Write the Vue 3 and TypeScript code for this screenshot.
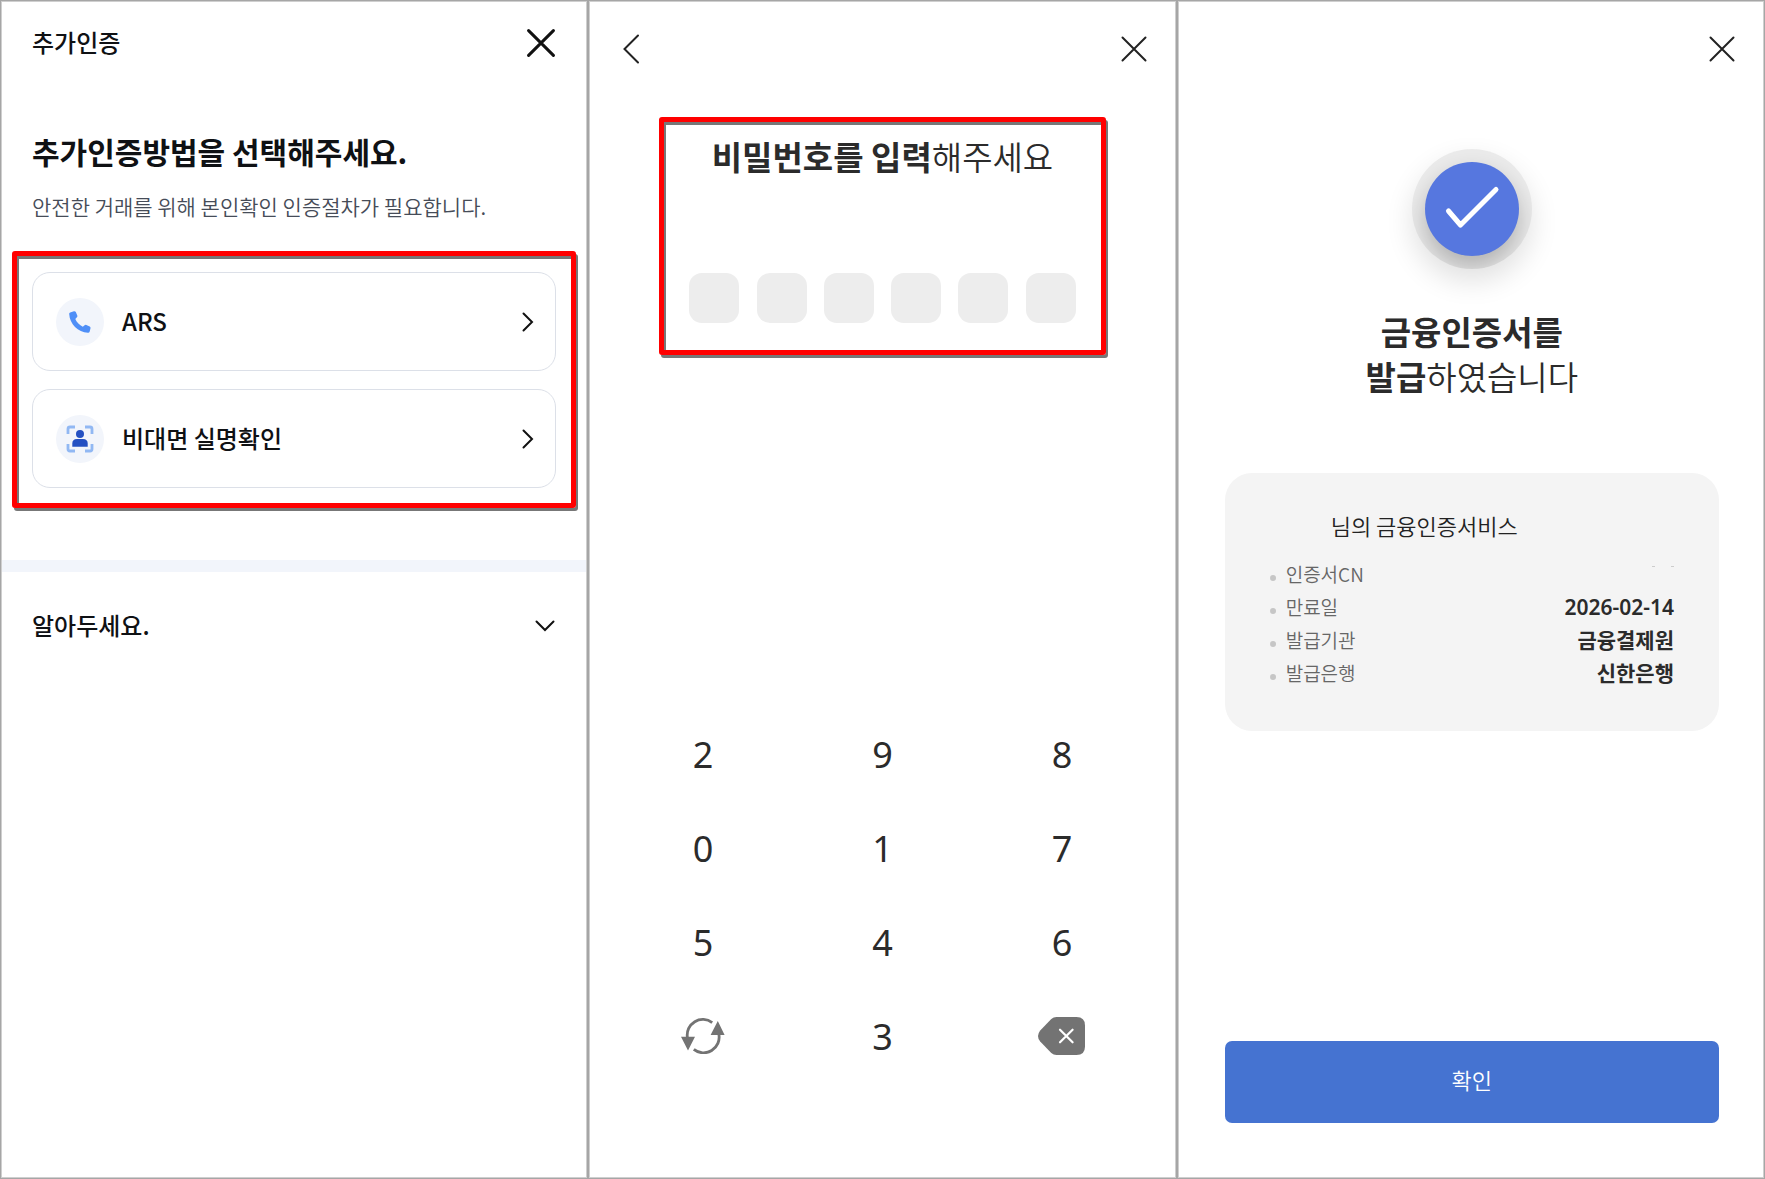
<script setup lang="ts">
import { ref } from 'vue'

interface Method { id: string; label: string }
interface Detail { label: string; value: string }

const methods: Method[] = [
  { id: 'ars', label: 'ARS' },
  { id: 'face', label: '비대면 실명확인' },
]

const details: Detail[] = [
  { label: '인증서CN', value: '' },
  { label: '만료일', value: '2026-02-14' },
  { label: '발급기관', value: '금융결제원' },
  { label: '발급은행', value: '신한은행' },
]

const keys: string[] = ['2', '9', '8', '0', '1', '7', '5', '4', '6', 'shuffle', '3', 'delete']
const pinLength = 6
const pin = ref<string[]>([])

function press(key: string) {
  if (key === 'shuffle') return
  if (key === 'delete') pin.value.pop()
  else if (pin.value.length < pinLength) pin.value.push(key)
}
</script>

<template>
  <main class="screens">
    <section class="panel">
      <header class="bar">
        <h1 class="bar-title">추가인증</h1>
        <button class="icon-btn" type="button" aria-label="닫기">
          <svg class="close-lg" viewBox="0 0 28 28"><path d="M1.6 1.6 26.4 26.4M26.4 1.6 1.6 26.4" /></svg>
        </button>
      </header>
      <h2 class="lead">추가인증방법을 선택해주세요.</h2>
      <p class="sub">안전한 거래를 위해 본인확인 인증절차가 필요합니다.</p>

      <div class="frame methods">
        <button v-for="m in methods" :key="m.id" class="method" type="button">
          <span class="method-icon">
            <svg v-if="m.id === 'ars'" viewBox="0 0 48 48">
              <path fill="#4f8ff7" d="M14.2 14.4 17.9 13.2Q19.2 12.9 19.8 14.1L21.3 17.4Q21.7 18.5 20.9 19.3L19.3 20.9C20.8 24.2 23.6 27.1 26.8 28.7L28.6 27.2Q29.4 26.5 30.4 27L33.7 28.5Q34.8 29.1 34.5 30.3L33.7 33.6Q33.3 34.9 31.9 34.8C22 34.3 13.7 26 13.2 16Q13.1 14.8 14.2 14.4Z" />
            </svg>
            <svg v-else viewBox="0 0 48 48">
              <path fill="none" stroke="#91b8f3" stroke-width="2.8" d="M12 19V14Q12 12 14 12H19M29 12H34Q36 12 36 14V19M36 29V34Q36 36 34 36H29M19 36H14Q12 36 12 34V29" />
              <circle cx="24" cy="19" r="4" fill="#2450c2" />
              <path fill="#2450c2" d="M16.3 31.8V28.6Q16.3 24 21 24H27Q31.7 24 31.7 28.6V31.8Z" />
            </svg>
          </span>
          <span class="method-label">{{ m.label }}</span>
          <svg class="chevron" viewBox="0 0 12 20"><path d="M1.5 1.5 10 10 1.5 18.5" /></svg>
        </button>
      </div>

      <div class="divider"></div>
      <button class="notice" type="button" aria-expanded="false">
        <span class="notice-label">알아두세요.</span>
        <svg class="chevron-down" viewBox="0 0 20 12"><path d="M1.5 1.5 10 10 18.5 1.5" /></svg>
      </button>
    </section>

    <section class="panel">
      <header class="bar tall">
        <button class="icon-btn" type="button" aria-label="뒤로">
          <svg class="back" viewBox="0 0 18 30"><path d="M16 1.5 2.5 15 16 28.5" /></svg>
        </button>
        <button class="icon-btn" type="button" aria-label="닫기">
          <svg class="close-sm" viewBox="0 0 26 26"><path d="M1.5 1.5 24.5 24.5M24.5 1.5 1.5 24.5" /></svg>
        </button>
      </header>

      <div class="frame pin-box">
        <h2 class="headline"><strong>비밀번호를 입력</strong>해주세요</h2>
        <div class="pin">
          <input
            v-for="n in pinLength" :key="n" class="pin-cell" type="password" maxlength="1" readonly
            :value="pin[n - 1] ?? ''" :aria-label="`비밀번호 ${n}번째 자리`"
          />
        </div>
      </div>

      <div class="keypad">
        <button v-for="k in keys" :key="k" class="key" type="button" :aria-label="k" @click="press(k)">
          <svg v-if="k === 'shuffle'" class="shuffle" viewBox="0 0 44 36">
            <path fill="none" stroke="#737373" stroke-width="2.8" d="M6.4 19.5A15.6 15.6 0 0 1 31.2 4.6M37.8 16A15.6 15.6 0 0 1 12.8 31.4" />
            <path fill="#737373" d="M0 18.7H14L7 32.6ZM29.6 17H43.6L36.8 3Z" />
          </svg>
          <svg v-else-if="k === 'delete'" class="delete" viewBox="0 0 48 38">
            <path fill="#737373" d="M18.5 0H38.5Q47 0 47 8.5V29.5Q47 38 38.5 38H18.5Q15.5 38 13.3 36L2.2 24.6Q-2.2 19 2.2 13.4L13.3 2Q15.5 0 18.5 0Z" />
            <path fill="none" stroke="#fff" stroke-width="2.2" stroke-linecap="round" d="M22 12.7 34.6 25.3M34.6 12.7 22 25.3" />
          </svg>
          <template v-else>{{ k }}</template>
        </button>
      </div>
    </section>

    <section class="panel">
      <header class="bar tall end">
        <button class="icon-btn" type="button" aria-label="닫기">
          <svg class="close-sm" viewBox="0 0 26 26"><path d="M1.5 1.5 24.5 24.5M24.5 1.5 1.5 24.5" /></svg>
        </button>
      </header>

      <div class="result">
        <div class="badge">
          <div class="badge-core">
            <svg viewBox="0 0 94 94"><path d="M23.5 49 35.5 63 71 27.5" /></svg>
          </div>
        </div>
        <h2 class="headline done"><strong>금융인증서를<br />발급</strong>하였습니다</h2>

        <div class="card">
          <p class="card-title"><span class="holder"></span>님의 금융인증서비스</p>
          <dl class="details">
            <div v-for="d in details" :key="d.label" class="detail">
              <dt>{{ d.label }}</dt>
              <dd v-if="d.value">{{ d.value }}</dd>
              <dd v-else class="masked"><i></i><i></i></dd>
            </div>
          </dl>
        </div>

        <button class="confirm" type="button">확인</button>
      </div>
    </section>
  </main>
</template>

<style>
body {
  margin: 0;
  background: #fff;
}
</style>

<style scoped>
* {
  box-sizing: border-box;
}

.screens {
  display: grid;
  grid-template-columns: repeat(3, minmax(0, 1fr));
  min-height: 100vh;
  font-family: "Noto Sans CJK KR", sans-serif;
  color: #0f1114;
}

h1, h2, p, dl, dd {
  margin: 0;
}

button {
  padding: 0;
  border: 0;
  background: none;
  font-family: inherit;
  color: inherit;
  cursor: pointer;
}

svg {
  display: block;
}

.panel {
  display: flex;
  flex-direction: column;
  border: 1px solid #a6a6a6;
  box-shadow: inset 0 0 0 1px #cfcfcf;
}

.bar {
  display: flex;
  align-items: center;
  justify-content: space-between;
  height: 84px;
  padding: 0 32px 0 31px;
}

.bar.tall {
  height: 96px;
  padding: 0 29px 0 33px;
}

.bar.end {
  justify-content: flex-end;
}

.bar-title,
.method-label,
.notice-label {
  padding-bottom: 2px;
  font-size: 24px;
  line-height: 36px;
  font-weight: 500;
}

.close-lg,
.close-sm,
.back,
.chevron,
.chevron-down {
  fill: none;
  stroke: #111;
  stroke-width: 2;
  stroke-linecap: round;
}

.close-lg {
  width: 28px;
  height: 28px;
  stroke-width: 3;
}

.close-sm {
  width: 26px;
  height: 26px;
  stroke: #222;
}

.back {
  width: 18px;
  height: 30px;
  stroke: #222;
}

.lead {
  margin: 46px 31px 0;
  font-size: 30px;
  line-height: 40px;
  font-weight: 700;
}

.sub {
  margin: 20px 31px 0;
  font-size: 21px;
  line-height: 30px;
  font-weight: 350;
  color: #464c58;
}

.frame {
  border: 5px solid #f00;
  border-radius: 3px;
  box-shadow: 2px 3px 0 #777, inset 2px 3px 0 #777;
}

.methods {
  display: flex;
  flex-direction: column;
  gap: 18px;
  margin: 30px 11px 0;
  padding: 16px 15px 15px;
}

.method {
  display: flex;
  align-items: center;
  height: 99px;
  padding: 0 21px 0 23px;
  border: 1px solid #dce0e8;
  border-radius: 18px;
  background: #fff;
  text-align: left;
}

.method-icon {
  width: 48px;
  height: 48px;
  border-radius: 50%;
  background: #f2f5fb;
}

.method-label {
  flex: 1;
  margin-left: 18px;
}

.chevron {
  width: 12px;
  height: 20px;
}

.divider {
  height: 12px;
  margin: 52px 1px 0;
  background: #f2f5fb;
}

.notice {
  display: flex;
  align-items: center;
  justify-content: space-between;
  height: 60px;
  margin: 24px 32px 0 31px;
}

.chevron-down {
  width: 20px;
  height: 12px;
}

.pin-box {
  margin: 20px 70px 0;
  padding: 12px 25px 27px;
}

.headline {
  font-size: 33px;
  line-height: 45px;
  font-weight: 350;
  text-align: center;
  color: #2b2b2b;
}

.headline strong {
  font-weight: 700;
}

.pin {
  display: flex;
  justify-content: space-between;
  margin-top: 94px;
}

.pin-cell {
  width: 50px;
  height: 50px;
  padding: 0;
  border: 0;
  border-radius: 13px;
  background: #ededed;
  font-size: 24px;
  text-align: center;
}

.keypad {
  display: grid;
  grid-template-columns: repeat(3, 1fr);
  grid-auto-rows: 94px;
  margin-top: auto;
  padding: 0 24px 95px;
}

.key {
  display: flex;
  align-items: center;
  justify-content: center;
  font-family: "Noto Sans", sans-serif;
  font-size: 36px;
  color: #2b2b2b;
}

.shuffle {
  width: 44px;
  height: 36px;
}

.delete {
  width: 48px;
  height: 38px;
}

.result {
  display: flex;
  flex: 1;
  flex-direction: column;
  padding: 52px 45px 55px 47px;
}

.badge {
  display: grid;
  place-items: center;
  align-self: center;
  width: 120px;
  height: 120px;
  border-radius: 50%;
  background: #ebebeb;
  box-shadow: 0 12px 28px rgba(0, 0, 0, 0.12);
  overflow: hidden;
}

.badge-core {
  width: 94px;
  height: 94px;
  border-radius: 50%;
  background: #5677df;
  box-shadow: 0 12px 24px rgba(0, 0, 0, 0.25);
}

.badge-core path {
  fill: none;
  stroke: #fff;
  stroke-width: 5;
  stroke-linecap: round;
  stroke-linejoin: round;
}

.done {
  margin-top: 40px;
}

.card {
  margin-top: 74px;
  padding: 36px 45px 41px;
  border-radius: 27px;
  background: #f4f4f4;
}

.card-title {
  display: flex;
  font-size: 22px;
  line-height: 32px;
  font-weight: 350;
  color: #222;
}

.holder {
  width: 61px;
}

.details {
  margin-top: 17px;
}

.detail {
  display: flex;
  align-items: center;
  justify-content: space-between;
  height: 33px;
}

.detail dt {
  display: flex;
  align-items: center;
  gap: 10px;
  padding-bottom: 2px;
  font-size: 19px;
  line-height: 33px;
  font-weight: 350;
  color: #666;
}

.detail dt::before {
  content: "";
  width: 6px;
  height: 6px;
  margin-top: 8px;
  border-radius: 50%;
  background: #c6c6c6;
}

.detail dd {
  font-family: "Noto Sans", "Noto Sans CJK KR", sans-serif;
  font-size: 21px;
  line-height: 33px;
  font-weight: 600;
  color: #2b2b2b;
}

.detail .masked {
  display: flex;
  align-self: flex-start;
  gap: 16px;
  padding-top: 8px;
}

.masked i {
  width: 3px;
  height: 1px;
  background: #ccc;
}

.confirm {
  height: 82px;
  margin-top: auto;
  padding-bottom: 6px;
  border-radius: 7px;
  background: #4573d1;
  color: #fff;
  font-size: 22px;
  line-height: 32px;
  font-weight: 350;
}
</style>
